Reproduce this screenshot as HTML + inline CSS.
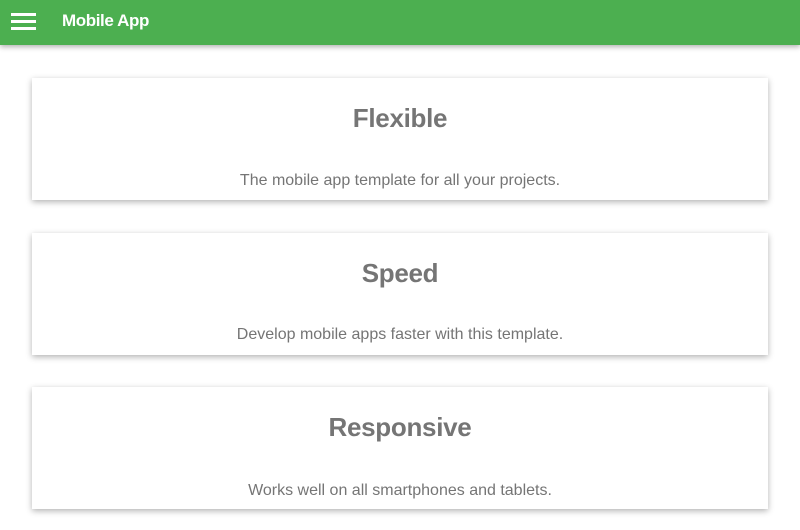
<!DOCTYPE html>
<html><head><style>
body{margin:0;width:800px;height:530px;background:#fff;font-family:"Liberation Sans",sans-serif;overflow:hidden;position:relative}
.hdr{position:absolute;left:0;top:0;width:800px;height:45px;background:#4caf50;box-shadow:0 2px 5px rgba(0,0,0,.3)}
.bar{position:absolute;left:11px;width:25px;height:3px;background:#fff}
.ttl{position:absolute;left:62px;top:11px;color:#fff;font-size:17px;font-weight:bold;letter-spacing:-0.4px}
.card{position:absolute;left:32px;width:736px;height:122px;background:#fff;box-shadow:0 2px 6px rgba(0,0,0,.3);text-align:center;color:#757575}
.card h2{position:absolute;left:0;right:0;top:25px;margin:0;font-size:26px;font-weight:bold;letter-spacing:-0.3px}
.card p{position:absolute;left:0;right:0;top:94px;margin:0;font-size:16px}
</style></head><body>
<div class="hdr"><div class="bar" style="top:13px"></div><div class="bar" style="top:20px"></div><div class="bar" style="top:27px"></div><div class="ttl">Mobile App</div></div>
<div class="card" style="top:78px"><h2>Flexible</h2><p>The mobile app template for all your projects.</p></div>
<div class="card" style="top:233px"><h2>Speed</h2><p style="top:93px">Develop mobile apps faster with this template.</p></div>
<div class="card" style="top:387px"><h2>Responsive</h2><p style="top:95px">Works well on all smartphones and tablets.</p></div>
</body></html>
